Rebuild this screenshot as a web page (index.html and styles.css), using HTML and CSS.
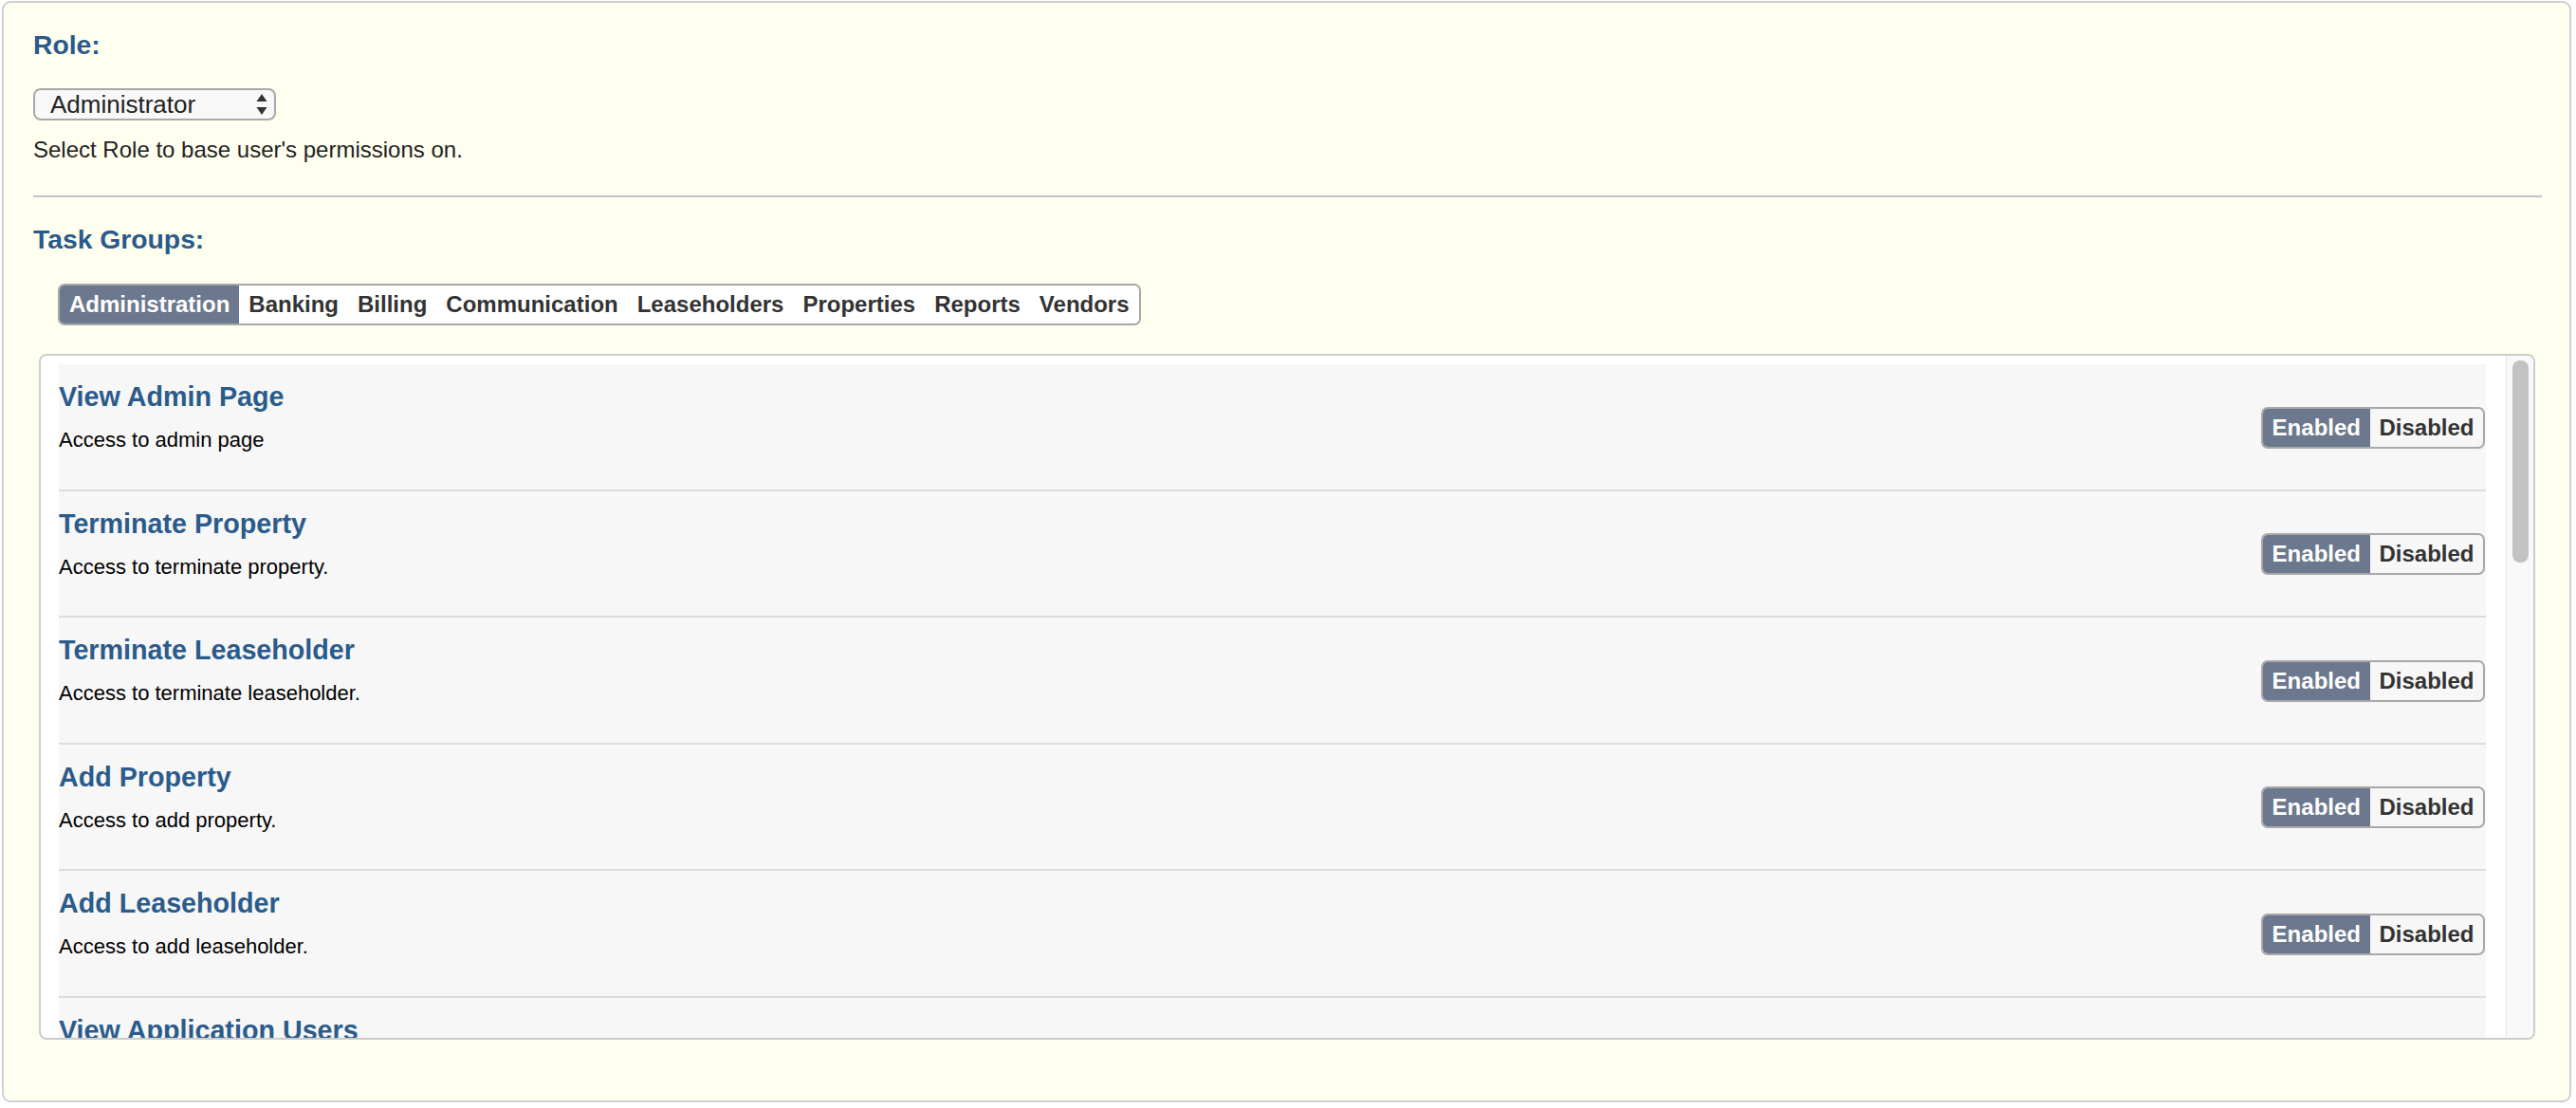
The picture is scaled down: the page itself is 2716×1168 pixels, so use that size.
FILE: index.html
```html
<!DOCTYPE html>
<html lang="en">
<head>
<meta charset="utf-8">
<title>User Permissions</title>
<link rel="stylesheet" href="styles.css">
</head>
<body>
<div class="page">
  <h2 class="section-title">Role:</h2>
  <div class="select-wrap">
    <select class="role-select">
      <option>Administrator</option>
      <option>Manager</option>
      <option>Staff</option>
    </select>
    <svg class="select-arrows" viewBox="0 0 12 22" aria-hidden="true"><path d="M6 0 L11.5 8 L0.5 8 Z M0.5 14 L11.5 14 L6 22 Z" fill="#333"/></svg>
  </div>
  <p class="hint">Select Role to base user's permissions on.</p>
  <div class="divider"></div>
  <h2 class="section-title">Task Groups:</h2>
  <div class="tabs">
    <span class="tab active">Administration</span>
    <span class="tab">Banking</span>
    <span class="tab">Billing</span>
    <span class="tab">Communication</span>
    <span class="tab">Leaseholders</span>
    <span class="tab">Properties</span>
    <span class="tab">Reports</span>
    <span class="tab">Vendors</span>
  </div>
  <div class="panel">
    <div class="list">
      <div class="row"><div class="info"><div class="task-title">View Admin Page</div><div class="task-desc">Access to admin page</div></div><div class="toggle"><span class="opt on">Enabled</span><span class="opt">Disabled</span></div></div>
      <div class="row"><div class="info"><div class="task-title">Terminate Property</div><div class="task-desc">Access to terminate property.</div></div><div class="toggle"><span class="opt on">Enabled</span><span class="opt">Disabled</span></div></div>
      <div class="row"><div class="info"><div class="task-title">Terminate Leaseholder</div><div class="task-desc">Access to terminate leaseholder.</div></div><div class="toggle"><span class="opt on">Enabled</span><span class="opt">Disabled</span></div></div>
      <div class="row"><div class="info"><div class="task-title">Add Property</div><div class="task-desc">Access to add property.</div></div><div class="toggle"><span class="opt on">Enabled</span><span class="opt">Disabled</span></div></div>
      <div class="row"><div class="info"><div class="task-title">Add Leaseholder</div><div class="task-desc">Access to add leaseholder.</div></div><div class="toggle"><span class="opt on">Enabled</span><span class="opt">Disabled</span></div></div>
      <div class="row"><div class="info"><div class="task-title">View Application Users</div><div class="task-desc">Access to view application users.</div></div><div class="toggle"><span class="opt on">Enabled</span><span class="opt">Disabled</span></div></div>
    </div>
    <div class="scrollbar"><div class="thumb"></div></div>
  </div>
</div>
</body>
</html>
```

FILE: styles.css
```css
html, body {
  margin: 0;
  padding: 0;
  background: #ffffff;
}

body {
  font-family: "Liberation Sans", Arial, Helvetica, sans-serif;
  color: #222;
}

.page {
  margin: 1px 5px 0 2px;
  border: 2px solid #cfcfcf;
  border-radius: 9px;
  background: #fffff0;
  padding: 27px 29px 64px 31px;
}

.section-title {
  margin: 0;
  font-size: 28.3px;
  line-height: 34px;
  font-weight: bold;
  color: #2a5a8a;
}

.select-wrap {
  position: relative;
  width: 256px;
  height: 34px;
  margin-top: 29px;
}

.role-select {
  -webkit-appearance: none;
  appearance: none;
  box-sizing: border-box;
  width: 256px;
  height: 34px;
  margin: 0;
  border: 2px solid #a9a9a9;
  border-radius: 8px;
  background: #f8f8f8;
  color: #222;
  font-family: "Liberation Sans", Arial, Helvetica, sans-serif;
  font-size: 26px;
  line-height: 30px;
  padding: 0 0 0 16px;
  outline: none;
}

.select-arrows {
  position: absolute;
  right: 9px;
  top: 6px;
  width: 12px;
  height: 22px;
  pointer-events: none;
}

.hint {
  margin: 17px 0 0 0;
  font-size: 24px;
  line-height: 28px;
  color: #222;
}

.divider {
  margin-top: 34px;
  border-top: 2px solid #c4c4c4;
  margin-bottom: 27px;
}

.tabs {
  display: inline-flex;
  margin: 30px 0 0 26px;
  border: 2px solid #a8a8a8;
  border-radius: 7px;
  background: #ffffff;
  overflow: hidden;
}

.tab {
  display: block;
  padding: 0 10px;
  height: 40px;
  line-height: 40px;
  font-size: 24px;
  font-weight: bold;
  color: #333;
}

.tab.active {
  background: #6b788e;
  color: #ffffff;
}

.panel {
  box-sizing: border-box;
  display: flex;
  height: 723px;
  margin: 30px 7px 0 6px;
  border: 2px solid #cccccc;
  border-radius: 8px;
  background: #ffffff;
  overflow: hidden;
}

.list {
  flex: 1;
  min-width: 0;
  overflow: hidden;
  padding: 9px 21px 0 19px;
}

.scrollbar {
  box-sizing: border-box;
  flex: 0 0 29px;
  border-left: 1px solid #e4e4e4;
  background: #f9f9f9;
  padding: 5px 5px 0 6px;
}

.thumb {
  height: 213px;
  border-radius: 8px;
  background: #c2c2c2;
}

.row {
  display: flex;
  align-items: center;
  justify-content: space-between;
  background: #f7f7f7;
  border-bottom: 2px solid #dddddd;
}

.info {
  padding: 18px 0 38.5px 0;
}

.task-title {
  font-size: 28.7px;
  line-height: 32px;
  font-weight: bold;
  color: #2b5b8b;
}

.task-desc {
  margin-top: 17px;
  font-size: 22px;
  line-height: 26px;
  color: #000;
}

.toggle {
  display: flex;
  margin-top: 2px;
  margin-right: 1px;
  border: 2px solid #a8a8a8;
  border-radius: 7px;
  overflow: hidden;
  background: #f7f7f7;
}

.opt {
  display: block;
  height: 40px;
  line-height: 40px;
  padding: 0 9.5px;
  font-size: 24px;
  font-weight: bold;
  color: #333;
}

.opt.on {
  background: #6b788e;
  color: #ffffff;
  padding: 0 10px;
}
```
